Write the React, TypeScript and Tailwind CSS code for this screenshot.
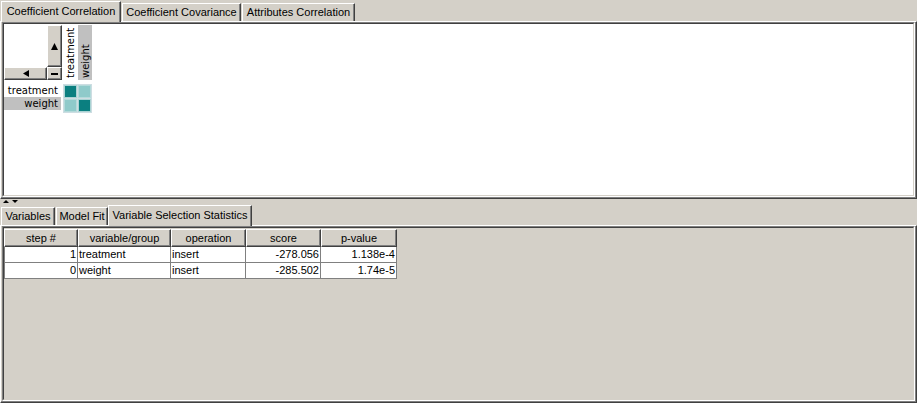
import type { ReactNode } from "react";

const raised =
  "bg-[#d4d0c8] border border-t-white border-l-white border-r-[#404040] border-b-[#404040] shadow-[inset_-1px_-1px_0_#808080]";

function Tab({ label, active, className }: { label: string; active?: boolean; className: string }) {
  return (
    <div
      className={`flex items-center justify-center bg-[#d4d0c8] border-t border-l border-r border-t-white border-l-white border-r-[#404040] shadow-[inset_-1px_0_0_#808080] text-[11px] text-black whitespace-nowrap ${
        active ? "relative z-10 h-[21px] -mb-px pb-[2px]" : "h-[18px]"
      } ${className}`}
    >
      {label}
    </div>
  );
}

function Pane({ children, inner }: { children: ReactNode; inner: string }) {
  return (
    <div className="h-[178px] bg-[#d4d0c8] border border-t-white border-l-white border-r-[#404040] border-b-[#404040] px-px pb-px shadow-[inset_-1px_-1px_0_#808080]">
      <div className="h-full border border-t-[#808080] border-l-[#808080] border-r-white border-b-white">
        <div
          className={`h-full border border-t-[#404040] border-l-[#404040] border-r-[#d4d0c8] border-b-[#d4d0c8] overflow-hidden ${inner}`}
        >
          {children}
        </div>
      </div>
    </div>
  );
}

function Cell({ on }: { on: boolean }) {
  return (
    <div
      className={`w-[13px] h-[13px] border ${
        on ? "bg-[#0b7f80] border-[#a9d3d3]" : "bg-[#8fcaca] border-[#b4dada]"
      }`}
    />
  );
}

function Matrix() {
  const vars = ["treatment", "weight"];
  const label = "font-['DejaVu_Sans',sans-serif] text-[10px] text-black";
  return (
    <div className="flex flex-col">
      {/* column header */}
      <div className="flex h-[56px]">
        <div className="w-[58px] flex flex-col">
          <div className="flex h-[43px]">
            <div className="w-[43px]" />
            <div className={`w-[15px] h-[42px] mt-px flex items-center justify-center ${raised}`}>
              <svg width="7" height="7" viewBox="0 0 7 7">
                <path d="M3.5 0 L7 7 L0 7 Z" fill="#000" />
              </svg>
            </div>
          </div>
          <div className="flex h-[13px]">
            <div className={`w-[43px] flex items-center justify-center ${raised}`}>
              <svg width="6" height="7" viewBox="0 0 6 7">
                <path d="M0 3.5 L6 0 L6 7 Z" fill="#000" />
              </svg>
            </div>
            <div className={`w-[15px] flex items-center justify-center ${raised}`}>
              <div className="w-[7px] h-[2px] bg-black" />
            </div>
          </div>
        </div>
        <div
          className={`w-[15px] ml-px mt-px flex items-center justify-start [writing-mode:vertical-rl] rotate-180 pt-[2px] ${label}`}
        >
          treatment
        </div>
        <div
          className={`w-[14px] mt-px flex items-center justify-start [writing-mode:vertical-rl] rotate-180 pt-[2px] bg-[#c0c0c0] ${label}`}
        >
          weight
        </div>
      </div>
      {/* rows */}
      <div className="flex mt-[4px]">
        <div className="w-[57px] flex flex-col">
          {vars.map((v, i) => (
            <div
              key={v}
              className={`h-[13px] flex items-center justify-end pr-[3px] ${label} ${i === 1 ? "bg-[#c0c0c0]" : ""}`}
            >
              {v}
            </div>
          ))}
        </div>
        <div className="ml-[2px] grid grid-cols-[13px_13px] gap-px p-px bg-[#cddde2]">
          {vars.map((r, i) => vars.map((c, j) => <Cell key={r + c} on={i === j} />))}
        </div>
      </div>
    </div>
  );
}

const cols = ["step #", "variable/group", "operation", "score", "p-value"];
const rows = [
  ["1", "treatment", "insert", "-278.056", "1.138e-4"],
  ["0", "weight", "insert", "-285.502", "1.74e-5"],
];
const align = ["justify-end", "justify-start", "justify-start", "justify-end", "justify-end"];

function StatsTable() {
  return (
    <div className="mt-px grid grid-cols-[74px_93px_75px_75px_76px] w-fit text-[11px] text-black">
      {cols.map((c) => (
        <div key={c} className={`h-[18px] flex items-center justify-center ${raised}`}>
          {c}
        </div>
      ))}
      {rows.map((r, ri) =>
        r.map((v, ci) => (
          <div
            key={`${ri}-${ci}`}
            className={`h-[16px] flex items-center px-[1px] bg-white border-r border-b border-[#808080] ${align[ci]} ${
              ci === 0 ? "border-l" : ""
            }`}
          >
            {v}
          </div>
        ))
      )}
    </div>
  );
}

export default function App() {
  return (
    <div className="w-[917px] h-[403px] bg-[#d4d0c8] overflow-hidden flex flex-col font-['Liberation_Sans',Arial,sans-serif]">
      {/* top tabs */}
      <div className="flex items-end h-[21px]">
        <Tab label="Coefficient Correlation" active className="ml-px w-[120px]" />
        <Tab label="Coefficient Covariance" className="ml-px w-[119px]" />
        <Tab label="Attributes Correlation" className="ml-px w-[113px]" />
      </div>
      <Pane inner="bg-white">
        <Matrix />
      </Pane>

      {/* split divider */}
      <div className="h-[5px] flex items-start gap-[3px] pl-[3px] pt-px">
        <svg width="6" height="3" viewBox="0 0 6 3">
          <path d="M3 0 L6 3 L0 3 Z" fill="#000" />
        </svg>
        <svg width="6" height="3" viewBox="0 0 6 3">
          <path d="M0 0 L6 0 L3 3 Z" fill="#000" />
        </svg>
      </div>

      {/* bottom tabs */}
      <div className="flex items-end h-[21px]">
        <Tab label="Variables" className="ml-px w-[54px]" />
        <Tab label="Model Fit" className="ml-px w-[52px]" />
        <Tab label="Variable Selection Statistics" active className="w-[144px]" />
      </div>
      <Pane inner="bg-[#d4d0c8]">
        <StatsTable />
      </Pane>
    </div>
  );
}
